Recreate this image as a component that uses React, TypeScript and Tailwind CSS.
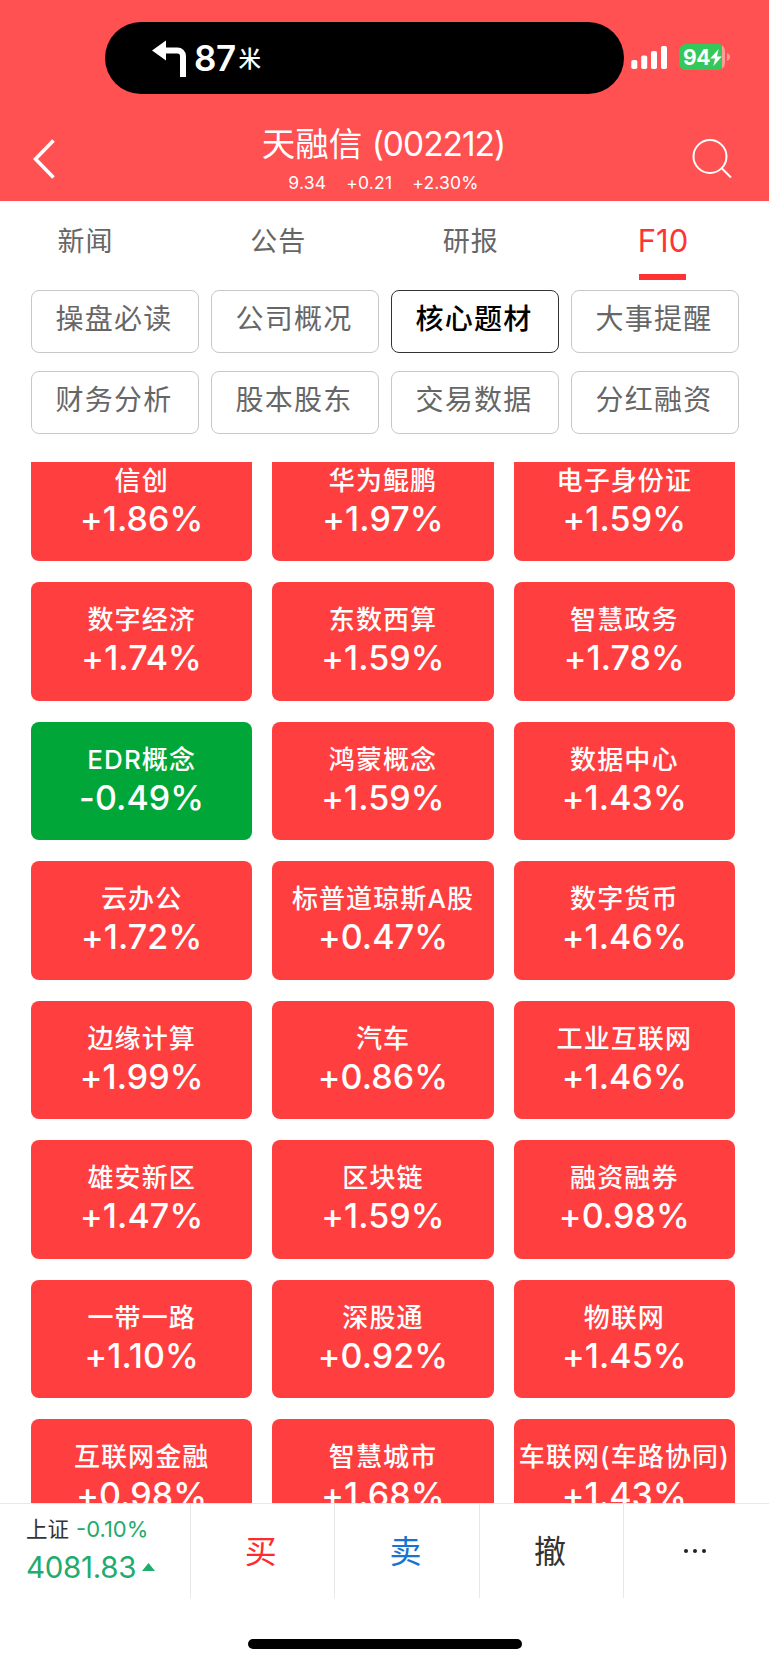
interface Concept {
  name: string;
  change: string;
}

const tabs = ["新闻", "公告", "研报", "F10"];

const sections = [
  "操盘必读",
  "公司概况",
  "核心题材",
  "大事提醒",
  "财务分析",
  "股本股东",
  "交易数据",
  "分红融资",
];

const concepts: Concept[] = [
  { name: "信创", change: "+1.86%" },
  { name: "华为鲲鹏", change: "+1.97%" },
  { name: "电子身份证", change: "+1.59%" },
  { name: "数字经济", change: "+1.74%" },
  { name: "东数西算", change: "+1.59%" },
  { name: "智慧政务", change: "+1.78%" },
  { name: "EDR概念", change: "-0.49%" },
  { name: "鸿蒙概念", change: "+1.59%" },
  { name: "数据中心", change: "+1.43%" },
  { name: "云办公", change: "+1.72%" },
  { name: "标普道琼斯A股", change: "+0.47%" },
  { name: "数字货币", change: "+1.46%" },
  { name: "边缘计算", change: "+1.99%" },
  { name: "汽车", change: "+0.86%" },
  { name: "工业互联网", change: "+1.46%" },
  { name: "雄安新区", change: "+1.47%" },
  { name: "区块链", change: "+1.59%" },
  { name: "融资融券", change: "+0.98%" },
  { name: "一带一路", change: "+1.10%" },
  { name: "深股通", change: "+0.92%" },
  { name: "物联网", change: "+1.45%" },
  { name: "互联网金融", change: "+0.98%" },
  { name: "智慧城市", change: "+1.68%" },
  { name: "车联网(车路协同)", change: "+1.43%" },
];

const StatusBar = () => (
  <div className="flex pt-[22px] pl-[105px]">
    <div className="flex h-18 w-[519px] items-center rounded-full bg-black pl-[47px]">
      <svg width="34" height="37" viewBox="0 0 34 37" fill="none">
        <path d="M0 10.5 14 0.5v20z" fill="#fff" />
        <path d="M12 10.5h13.5a5.5 5.5 0 0 1 5.5 5.5v21" stroke="#fff" strokeWidth="6" />
      </svg>
      <span className="ml-[8px] text-[35px] leading-none font-semibold tracking-[-0.5px]">87</span>
      <span className="mt-[3px] ml-[3px] text-[22.5px] leading-none font-medium">米</span>
    </div>
    <svg className="mt-[23px] ml-[7px]" width="37" height="24" viewBox="0 0 37 24" fill="#fff">
      <rect x="0.3" y="15" width="6" height="9" rx="1.8" />
      <rect x="10.2" y="10.5" width="6" height="13.5" rx="1.8" />
      <rect x="20" y="6" width="6" height="18" rx="1.8" />
      <rect x="30" y="1" width="6" height="23" rx="1.8" />
    </svg>
    <div className="mt-[22px] ml-[11px] flex h-[26px] w-[46px] items-center overflow-hidden rounded-[7px] bg-linear-to-r from-[#34c759] from-94% to-[#ff9a9b] to-94% pl-[4px]">
      <span className="mt-px text-[21px] leading-none font-bold tracking-[-0.3px]">94</span>
      <svg width="12" height="17" viewBox="0 0 11 16" fill="#fff">
        <path d="M8 0 0 9h4.600L3 16l8-9H6.400z" />
      </svg>
    </div>
    <svg className="mt-[31px] ml-[2px]" width="3" height="8" viewBox="0 0 3 8" fill="#ff9a9b">
      <path d="M0 0c4 1.500 4 6.500 0 8z" />
    </svg>
  </div>
);

const Header = () => (
  <header className="h-[201px] shrink-0 bg-[#ff5052] text-white">
    <StatusBar />
    <div className="flex h-[107px] justify-between pr-[37px] pl-[33px]">
      <svg className="mt-[45px]" width="42" height="40" viewBox="0 0 42 40" fill="none" stroke="#fff" strokeWidth="3.6">
        <path d="M20.500 1.500 2.500 20 20.500 38.500" />
      </svg>
      <div className="flex flex-col items-center pt-[28px]">
        <h1 className="text-[33.500px] leading-[44px] whitespace-nowrap">
          天融信 <span className="tracking-[-1px]">(002212)</span>
        </h1>
        <div className="mt-[6px] flex gap-[20px] text-[17.5px] leading-[22px] tracking-[0.2px]">
          <span>9.34</span>
          <span>+0.21</span>
          <span>+2.30%</span>
        </div>
      </div>
      <svg className="mt-[45px]" width="40" height="40" viewBox="0 0 40 40" fill="none" stroke="#fff" strokeWidth="2">
        <circle cx="18" cy="17.500" r="16.500" />
        <path d="m29.500 29 9.500 9.500" />
      </svg>
    </div>
  </header>
);

const Tabs = () => (
  <nav className="flex h-[79px] shrink-0 justify-between pr-[56px] pl-[35px] text-[27px] text-[#666]">
    {tabs.map((tab) => (
      <div key={tab} className="flex w-[100px] flex-col items-center">
        {tab === "F10" ? (
          <>
            <span className="mt-[20px] h-[53px] text-[31px] leading-[40px] text-[#ff3333]">{tab}</span>
            <span className="h-[6px] w-[47px] bg-[#ff3333]" />
          </>
        ) : (
          <span className="mt-[21px] pl-px leading-[40px] tracking-[1px]">{tab}</span>
        )}
      </div>
    ))}
  </nav>
);

const Sections = () => (
  <div className="grid shrink-0 grid-cols-4 gap-x-[12px] gap-y-[18px] pt-[10px] pr-[30px] pl-[31px]">
    {sections.map((section) => (
      <button
        key={section}
        className={`h-[63px] rounded-[8px] border pr-[2px] pb-[5px] text-[28px] leading-[40px] tracking-[1.3px] whitespace-nowrap ${
          section === "核心题材"
            ? "border-[#333] font-medium text-black"
            : "border-[#c8c8c8] text-[#666]"
        }`}
      >
        {section}
      </button>
    ))}
  </div>
);

const ConceptCard = ({ name, change }: Concept) => (
  <div
    className={`flex h-[118.3px] flex-col items-center rounded-[8px] pt-[21px] whitespace-nowrap ${
      change.startsWith("-") ? "bg-[#00a637]" : "bg-[#ff3f3f]"
    }`}
  >
    <span className="text-[26px] leading-[34px] font-medium tracking-[1.1px]">{name}</span>
    <span className="mt-px text-[34px] leading-[40px] font-[450] tracking-[0.1px]">{change}</span>
  </div>
);

const BottomBar = () => (
  <footer className="h-[162px] shrink-0 border-t border-[#e8e8e8] bg-white">
    <div className="flex h-[94px] text-[32px]">
      <div className="flex w-[189.5px] flex-col pt-[9px] pl-[26px]">
        <div className="flex items-center gap-[7px] text-[21.5px] leading-[32px]">
          <span className="text-[#333]">上证</span>
          <span className="text-[22px] text-[#21ab6d]">-0.10%</span>
        </div>
        <div className="mt-[3px] flex items-center gap-[6px] text-[29.500px] leading-[38px] text-[#21ab6d]">
          <span className="tracking-[-0.3px]">4081.83</span>
          <svg width="13" height="8" viewBox="0 0 13 8" fill="currentColor">
            <path d="M6.500 0 13 8H0z" />
          </svg>
        </div>
      </div>
      <button className="flex-1 border-l border-[#e8e8e8] pt-[2px] pr-[3px] text-[#ff2a2d]">买</button>
      <button className="flex-1 border-l border-[#e8e8e8] pt-[2px] pr-[3px] text-[#1973d2]">卖</button>
      <button className="flex-1 border-l border-[#e8e8e8] pt-[2px] pr-[3px] text-[#333]">撤</button>
      <button className="flex flex-1 items-center justify-center gap-[5px] border-l border-[#e8e8e8] pr-[4px]">
        <span className="size-[4px] rounded-full bg-[#222]" />
        <span className="size-[4px] rounded-full bg-[#222]" />
        <span className="size-[4px] rounded-full bg-[#222]" />
      </button>
    </div>
    <div className="mx-auto mt-[41px] h-[10px] w-[274px] rounded-full bg-black" />
  </footer>
);

const App = () => {
  return (
    <div className="flex h-[1665px] w-[769px] flex-col overflow-hidden bg-white font-['Inter','Noto_Sans_CJK_SC',sans-serif]">
      <Header />
      <Tabs />
      <Sections />
      <main className="mt-[28px] min-h-0 flex-1 overflow-hidden">
        <div className="-mt-[19.2px] grid grid-cols-3 gap-x-[20px] gap-y-[21.2px] pr-[34px] pl-[31px] text-white">
          {concepts.map((concept) => (
            <ConceptCard key={concept.name} {...concept} />
          ))}
        </div>
      </main>
      <BottomBar />
    </div>
  );
};

export default App;
